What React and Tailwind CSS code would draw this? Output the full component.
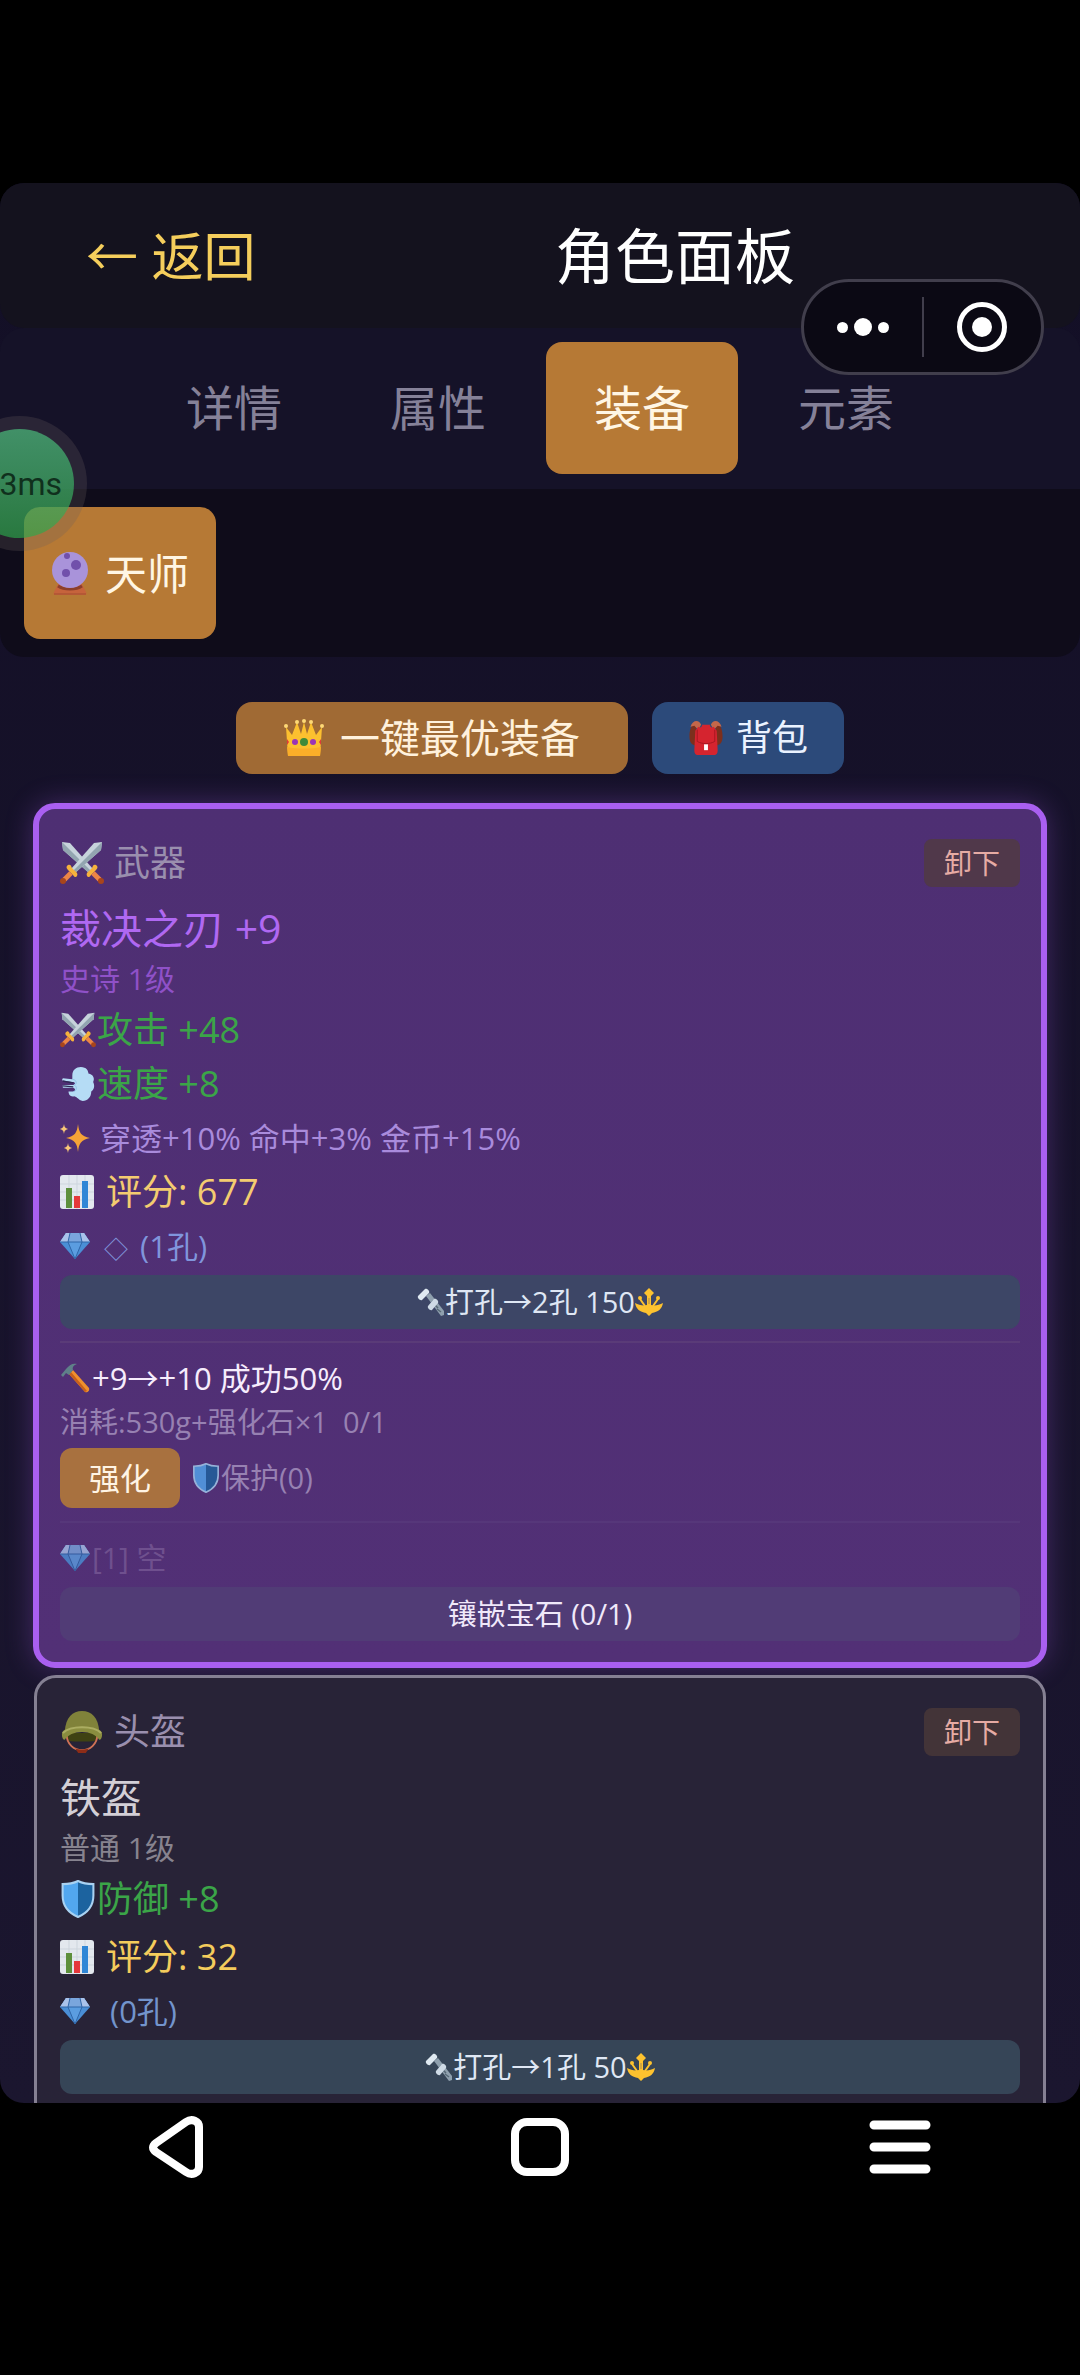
const FONT = "font-['Open_Sans','Noto_Sans_CJK_SC',sans-serif]";

function Blade() {
  return (
    <>
      <path d="M2 1l8 1 23 26-4 4L3 9z" fill="#c6d3db" />
      <path d="M2 1l29 29-2 2L3 9z" fill="#92a5b0" />
      <path d="M27 35c-1-2 0-4 2-5l3-3c1-3 2-4 4-3 2 1 2 3 0 5l-5 5c-1 2-3 3-4 1z" fill="#f6b23c" />
      <path d="M33 32l7 7" stroke="#ec8546" strokeWidth="5" />
      <circle cx="41" cy="40" r="3" fill="#a8451c" />
    </>
  );
}

function Swords({ className }) {
  return (
    <svg viewBox="0 0 44 44" className={className} aria-hidden="true">
      <Blade />
      <g transform="matrix(-1 0 0 1 44 0)">
        <Blade />
      </g>
    </svg>
  );
}

function Helmet({ className }) {
  return (
    <svg viewBox="0 0 44 46" className={className} aria-hidden="true">
      <path d="M6 24h32c0 4-1 7-3 9H9c-2-2-3-5-3-9z" fill="#3f4213" />
      <path d="M8 32c6 3 22 3 28 0-2 4-4 6-7 8H15c-3-2-5-4-7-8z" fill="#282337" />
      <path d="M6 26c0 10 8 16 16 16s16-6 16-16" fill="none" stroke="#cf7256" strokeWidth="2" />
      <path d="M15 40c4 2 10 2 14 0l-3 5h-8z" fill="#8d2c17" />
      <path d="M4 22C5 8 12 1 22 1s17 7 18 21z" fill="#80823a" />
      <path d="M1 25c0-4 7-8 21-8s21 4 21 8c0 4-1 6-3 6-3-5-10-8-18-8S7 26 4 31c-2 0-3-2-3-6z" fill="#8a8d3f" />
      <path d="M2 24c4-4 10-6 20-6s16 2 20 6" fill="none" stroke="#abad62" strokeWidth="2" />
    </svg>
  );
}

function Dash({ className }) {
  return (
    <svg viewBox="0 0 36 38" className={className} aria-hidden="true">
      <path d="M12 10c0-6 4-9 9-9 6 0 8 4 8 7 5 1 7 5 5 9 2 4 1 8-2 10 0 6-4 10-9 10-5-1-5-4-9-5-4 1-6-2-6-5h5c3-1 2-3 0-4H2v-3h11c3-1 2-3-1-3L1 15l1-2 10 1z" fill="#b5dcf5" />
      <path d="M12 14c4 0 6 5 2 6 4 2 2 7-1 7" fill="none" stroke="#8fc3e8" strokeWidth="1" />
      <path d="M2 16l11 2M2 21l11 1" stroke="#2e2a55" strokeWidth="1.5" />
    </svg>
  );
}

function Sparkles({ className }) {
  return (
    <svg viewBox="0 0 30 30" className={className} aria-hidden="true" fill="#f6a437">
      <path d="M18 1c1 9 3 12 12 14-9 2-11 5-12 14-1-9-3-12-12-14 9-2 11-5 12-14z" />
      <path d="M4 1c.5 3 1 4 4 5-3 1-3.500 2-4 5-.5-3-1-4-4-5 3-1 3.500-2 4-5z" fill="#f8c777" />
      <path d="M8 20c.5 3 1 4 4 5-3 1-3.500 2-4 5-.5-3-1-4-4-5 3-1 3.500-2 4-5z" fill="#f8c777" />
    </svg>
  );
}

function Chart({ className }) {
  return (
    <svg viewBox="0 0 34 34" className={className} aria-hidden="true">
      <rect width="34" height="34" rx="3" fill="#e3e8ee" />
      <path d="M0 9h34M0 17h34M0 25h34M9 0v34M17 0v34M25 0v34" stroke="#cdd5dd" />
      <rect x="6" y="13" width="6" height="20" fill="#5d8f3c" />
      <rect x="14" y="21" width="6" height="12" fill="#e5383b" />
      <rect x="22" y="6" width="6" height="27" fill="#2f86d6" />
    </svg>
  );
}

function Gem({ className }) {
  return (
    <svg viewBox="0 0 30 28" className={className} aria-hidden="true">
      <path d="M6 1h18l6 9-15 17L0 10z" fill="#4a8fd6" />
      <path d="M6 1h18l6 9H0z" fill="#7aa6dd" />
      <path d="M6 1L0 10h8l2-9zM24 1l6 9h-8l-2-9z" fill="#a9c2ea" />
      <path d="M8 10l7 17 7-17z" fill="#5b9de0" />
      <path d="M0 10h30M8 10l7 17 7-17M10 1L8 10M20 1l2 9" fill="none" stroke="#2f66a8" />
    </svg>
  );
}

function Shield({ className }) {
  return (
    <svg viewBox="0 0 32 37" className={className} aria-hidden="true">
      <path d="M16 1c4 2 9 3 15 3v11c0 11-6 17-15 21C7 32 1 26 1 15V4c6 0 11-1 15-3z" fill="#52a7ef" />
      <path d="M16 1c4 2 9 3 15 3v11c0 11-6 17-15 21z" fill="#1c639f" />
      <path d="M16 1c4 2 9 3 15 3v11c0 11-6 17-15 21C7 32 1 26 1 15V4c6 0 11-1 15-3z" fill="none" stroke="#a9d2f2" strokeWidth="2" />
    </svg>
  );
}

function Hammer({ className }) {
  return (
    <svg viewBox="0 0 30 30" className={className} aria-hidden="true">
      <path d="M9 11l4-4 16 18c1 3-2 5-4 4z" fill="#f0902c" />
      <path d="M9 11l2-2 16 19-2 1z" fill="#c8601c" />
      <path d="M1 12l5-6c4-5 7-6 11-5-3 1-5 3-4 6l-4 5-3-2-3 4z" fill="#5f8089" />
    </svg>
  );
}

function Bolt({ className }) {
  return (
    <svg viewBox="0 0 28 28" className={className} aria-hidden="true">
      <path d="M9 8l4-3 14 18v4l-3 1z" fill="#8fa0ae" />
      <path d="M15 13l3 3M18 17l3 3M20 21l4 3" stroke="#566875" strokeWidth="1.500" />
      <path d="M1 8l7-7c2-1 5 2 4 4l-7 7c-2 1-5-2-4-4z" fill="#dfe9f1" />
      <path d="M11 18l6-7c2-1 5 2 4 4l-6 7c-2 1-5-2-4-4z" fill="#cfdbe6" />
    </svg>
  );
}

function Trident({ className }) {
  return (
    <svg viewBox="0 0 28 28" className={className} aria-hidden="true">
      <g fill="#fdc22f">
        <path d="M14 0l5 5-5 5-5-5z" />
        <circle cx="5" cy="10" r="2" />
        <circle cx="23" cy="10" r="2" />
        <path d="M0 15c4 2 8 3 12 2V8h4v9c4 1 8 0 12-2-1 6-5 9-11 10l-3 3-3-3C5 24 1 21 0 15z" />
        <path d="M5 11l5 7M23 11l-5 7" stroke="#fdc22f" strokeWidth="2" />
      </g>
      <path d="M14 10v6" stroke="#a98a55" />
    </svg>
  );
}

function CrystalBall({ className }) {
  return (
    <svg viewBox="0 0 38 46" className={className} aria-hidden="true">
      <path d="M7 34h24l4 8c1 2 0 3-1 3H4c-1 0-2-1-1-3z" fill="#c6633c" />
      <path d="M7 36c6 4 18 4 24 0" fill="none" stroke="#8d3f2b" strokeWidth="3" />
      <path d="M3 44h32" stroke="#a34f30" strokeWidth="1" />
      <circle cx="19" cy="20" r="18" fill="#a993da" />
      <circle cx="16" cy="6" r="3" fill="#7150ab" />
      <circle cx="25" cy="15" r="5" fill="#7150ab" />
      <circle cx="15" cy="23" r="4" fill="#7150ab" />
    </svg>
  );
}

function Crown({ className }) {
  return (
    <svg viewBox="0 0 40 38" className={className} aria-hidden="true">
      <path d="M4 37L2 8l6 8 5-13 4 12 3-12 3 12 4-12 5 13 6-8-2 29z" fill="#fcc02f" />
      <path d="M3 28c10 2 24 2 34 0l-1 9H4z" fill="#fbae29" />
      <g fill="#fdd976">
        <circle cx="2" cy="7" r="2" />
        <circle cx="13" cy="3" r="2" />
        <circle cx="20" cy="2" r="2" />
        <circle cx="27" cy="3" r="2" />
        <circle cx="38" cy="7" r="2" />
      </g>
      <circle cx="20" cy="23" r="4" fill="#3f8a3a" />
      <circle cx="11" cy="23" r="3" fill="#9b34b5" />
      <circle cx="29" cy="23" r="3" fill="#9b34b5" />
      <path d="M3 20l2 3-2 3zM37 20l-2 3 2 3z" fill="#e0393a" />
    </svg>
  );
}

function Backpack({ className }) {
  return (
    <svg viewBox="0 0 36 37" className={className} aria-hidden="true">
      <path d="M8 3C3 4 1 10 1 17c0 5 2 9 6 9zM28 3c5 1 7 7 7 14 0 5-2 9-6 9z" fill="#7c2f1c" />
      <path d="M2 7C4 0 11-1 13 5l-3 5-4-4zM34 7c-2-7-9-8-11-2l3 5 4-4z" fill="#c4674a" />
      <path d="M10 7c2 2 4 0 4-2h8c0 2 2 4 4 2l3 4 1 20c0 4-2 5-4 5H10c-2 0-4-1-4-5l1-20z" fill="#d5242f" />
      <path d="M9 10v12c5 3 13 3 18 0V10" fill="none" stroke="#a81722" strokeWidth="1" />
      <rect x="16" y="25" width="4" height="6" fill="#fff" />
    </svg>
  );
}

function Row({ icon, className, children }) {
  return (
    <p className={`flex items-center whitespace-pre ${className}`}>
      {icon}
      <span>{children}</span>
    </p>
  );
}

function CardHeader({ icon, slot, buttonClass }) {
  return (
    <div className="mb-3.5 flex h-12 items-center justify-between">
      <h2 className="flex items-center gap-2.5 text-4xl/12 text-[#9a8fae]">
        {icon}
        {slot}
      </h2>
      <button type="button" className={`h-12 w-24 rounded-lg text-[28px]/12 text-[#e6aba4] ${buttonClass}`}>
        卸下
      </button>
    </div>
  );
}

function DrillButton({ className, children }) {
  return (
    <button
      type="button"
      className={`mt-0.5 flex h-[54px] w-full items-center justify-center rounded-xl text-[29px]/[50px] text-[#dfe7f4] ${className}`}
    >
      <Bolt className="size-7" />
      {children}
      <Trident className="size-7" />
    </button>
  );
}

const TABS = ["详情", "属性", "装备", "元素"];

export default function App() {
  return (
    <div className={`flex h-screen flex-col bg-black pt-[183px] text-white ${FONT}`}>
      <main className="relative min-h-0 flex-1 overflow-hidden rounded-3xl bg-linear-to-b from-[#130f26] to-[#1b162f]">
        <header className="flex h-[145px] items-center rounded-3xl bg-[#14121e]">
          <div className="w-1/4 pl-[86px]">
            <button type="button" className="text-[52px]/[60px] whitespace-nowrap text-[#f5ce5c]">
              ← 返回
            </button>
          </div>
          <h1 className="flex-1 text-center text-6xl/[72px]">角色面板</h1>
        </header>

        <nav className="flex justify-center gap-3 rounded-t-3xl bg-[#151228] pt-3.5 pb-[15px]">
          {TABS.map((tab) => (
            <button
              key={tab}
              type="button"
              className={
                tab === "装备"
                  ? "h-[132px] w-48 rounded-2xl bg-[#b67935] text-5xl text-[#fff6e4]"
                  : "h-[132px] w-48 rounded-2xl text-5xl text-[#858198]"
              }
            >
              {tab}
            </button>
          ))}
        </nav>

        <div className="rounded-b-3xl bg-[#0f0c1a] px-6 py-[18px]">
          <button
            type="button"
            className="flex h-[132px] w-48 items-center justify-center gap-4 rounded-2xl bg-[#b67935] text-[42px] text-[#fff6e4]"
          >
            <CrystalBall className="h-11.5 w-9.5" />
            天师
          </button>
        </div>

        <div className="mt-[45px] mb-[29px] flex justify-center gap-6">
          <button
            type="button"
            className="flex h-[72px] items-center gap-4 rounded-2xl bg-[#a06a34] px-12 text-[40px] text-[#fff1dc]"
          >
            <Crown className="h-9.5 w-10" />
            一键最优装备
          </button>
          <button
            type="button"
            className="flex h-[72px] items-center gap-3 rounded-2xl bg-[#2c4a7a] px-9 text-4xl text-[#eaf2ff]"
          >
            <Backpack className="size-9" />
            背包
          </button>
        </div>

        <section className="mx-[33px] rounded-[22px] border-6 border-[#a95ff0] bg-linear-to-b from-[#4e2f73] to-[#523076] px-[21px] pt-[30px] pb-[21px] shadow-[0_0_28px_#a95ff04d]">
          <CardHeader icon={<Swords className="size-11" />} slot="武器" buttonClass="bg-[#50384a]" />
          <h3 className="text-[41px]/[54px] text-[#b068f2]">裁决之刃 +9</h3>
          <p className="text-3xl/12 text-[#8f51c8]">史诗 1级</p>
          <Row icon={<Swords className="mr-px size-9" />} className="text-4xl/[54px] text-[#3ba548]">攻击 +48</Row>
          <Row icon={<Dash className="mr-px size-9" />} className="text-4xl/[54px] text-[#3ba548]">速度 +8</Row>
          <Row icon={<Sparkles className="mr-2.5 size-7.5" />} className="text-[31px]/[54px] text-[#a98bdc]">
            穿透+10% 命中+3% 金币+15%
          </Row>
          <Row icon={<Chart className="mr-3 size-8.5" />} className="text-4xl/[54px] text-[#f4cc70]">评分: 677</Row>
          <Row icon={<Gem className="mr-3.5 h-7 w-7.5" />} className="text-[31px]/[54px] text-[#8095dc]">
            <span className="mr-1 text-2xl">◇</span> (1孔)
          </Row>
          <DrillButton className="bg-[#3d4666]">打孔→2孔 150</DrillButton>

          <hr className="mt-3 mb-[11px] border-t-2 border-[#5a3b78]" />
          <Row icon={<Hammer className="mr-0.5 size-7.5" />} className="text-[31px]/12 text-[#f6ecfc]">+9→+10 成功50%</Row>
          <p className="text-[29px]/10 whitespace-pre text-[#9781b2]">消耗:530g+强化石×1  0/1</p>
          <div className="mt-1.5 flex items-center gap-3">
            <button type="button" className="h-15 w-30 rounded-xl bg-[#a8713f] text-[31px] text-[#fff4e4]">
              强化
            </button>
            <button type="button" className="flex items-center gap-px text-[29px]/10 text-[#9781b2]">
              <Shield className="h-7.5 w-7 opacity-80" />
              保护(0)
            </button>
          </div>

          <hr className="mt-[13px] mb-[11px] border-t-2 border-[#56377a]" />
          <Row icon={<Gem className="mr-0.5 h-7 w-7.5 opacity-80" />} className="text-3xl/12 text-[#6f508e]">[1] 空</Row>
          <button type="button" className="mt-[5px] h-[54px] w-full rounded-xl bg-[#513c76] text-[29px]/[50px] text-[#f0e8fa]">
            镶嵌宝石 (0/1)
          </button>
        </section>

        <section className="relative mx-[34px] mt-[7px] rounded-[22px] border-3 border-[#858093] bg-[#282337] px-[23px] pt-[30px] pb-[21px]">
          <CardHeader icon={<Helmet className="size-11" />} slot="头盔" buttonClass="bg-[#433438]" />
          <h3 className="text-[41px]/[54px] text-[#d3cfd6]">铁盔</h3>
          <p className="text-3xl/12 text-[#87838f]">普通 1级</p>
          <Row icon={<Shield className="mr-px h-9.5 w-9" />} className="mb-1 text-4xl/[54px] text-[#3ba548]">防御 +8</Row>
          <Row icon={<Chart className="mr-3 size-8.5" />} className="text-4xl/[54px] text-[#f4cc5c]">评分: 32</Row>
          <Row icon={<Gem className="mr-5 h-7 w-7.5" />} className="text-[31px]/[54px] text-[#7394cc]">(0孔)</Row>
          <DrillButton className="bg-[#364557]">打孔→1孔 50</DrillButton>
          <hr className="mt-3 border-t-2 border-[#36304a]" />
        </section>

        <div className="absolute top-[96px] right-9 flex h-24 w-[243px] items-center rounded-full border-3 border-[#413e4c] bg-[#0b0914]">
          <button type="button" aria-label="更多" className="flex flex-1 items-center justify-center gap-1.5">
            <span className="size-[11px] rounded-full bg-white" />
            <span className="size-[18px] rounded-full bg-white" />
            <span className="size-[11px] rounded-full bg-white" />
          </button>
          <span className="h-15 w-0.5 bg-[#413e4c]" />
          <button type="button" aria-label="关闭" className="flex flex-1 justify-center">
            <span className="flex size-[50px] items-center justify-center rounded-full border-5 border-white">
              <span className="size-5 rounded-full bg-white" />
            </span>
          </button>
        </div>

        <div className="absolute top-[233px] -left-12 flex size-[135px] items-center justify-center rounded-full bg-[#6d5f5f]/25">
          <div className="flex size-[109px] items-center justify-end rounded-full bg-linear-to-b from-[#49b478]/75 to-[#2aa84a]/65 pr-3 font-[Roboto,sans-serif] text-[32px] text-[#10301d]">
            3ms
          </div>
        </div>
      </main>

      <footer className="flex h-[272px] shrink-0 items-start justify-around pt-[13px]">
        <button type="button" aria-label="返回">
          <svg viewBox="0 0 62 62" className="size-[62px]" fill="none" stroke="#fff" strokeWidth="8" strokeLinejoin="round">
            <path d="M37 6L7 27c-4 3-4 6 0 9l30 20c6 4 13 1 13-5V11c0-6-7-9-13-5z" />
          </svg>
        </button>
        <button type="button" aria-label="主页">
          <svg viewBox="0 0 62 62" className="size-[62px]" fill="none" stroke="#fff" strokeWidth="8">
            <rect x="6" y="6" width="50" height="50" rx="12" />
          </svg>
        </button>
        <button type="button" aria-label="菜单">
          <svg viewBox="0 0 62 62" className="size-[62px]" stroke="#fff" strokeWidth="9" strokeLinecap="round">
            <path d="M5 9h52M5 31h52M5 53h52" />
          </svg>
        </button>
      </footer>
    </div>
  );
}
